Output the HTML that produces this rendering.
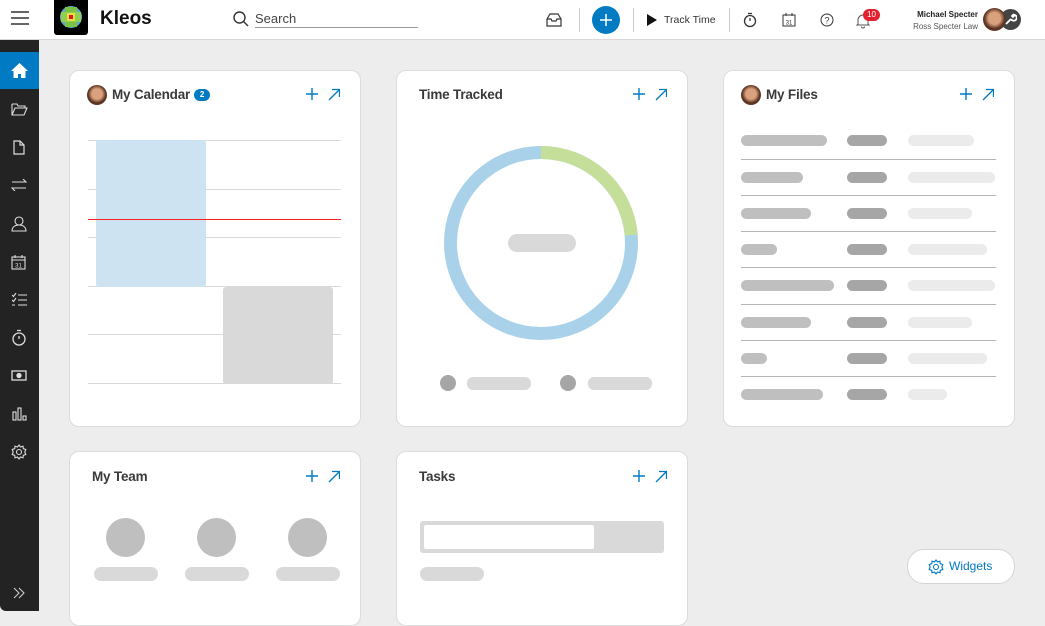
<!DOCTYPE html>
<html><head><meta charset="utf-8"><style>
*{box-sizing:border-box;margin:0;padding:0}
body{width:1045px;height:611px;overflow:hidden;background:#ededed;font-family:"Liberation Sans",sans-serif;position:relative}
.a{position:absolute}
.hdr{left:0;top:0;width:1045px;height:40px;background:#fff;border-bottom:1px solid #d8d8d8}
.side{left:0;top:40px;width:39px;height:571px;background:#232323;border-bottom-left-radius:6px}
.card{position:absolute;background:#fff;border:1px solid #dcdcdc;border-radius:10px}
.t{position:absolute;font-size:13.5px;font-weight:bold;color:#3a3a3a;letter-spacing:-0.2px}
.p{position:absolute;border-radius:6px}
.ln{position:absolute;height:1px;background:#d9d9d9}
.fl{position:absolute;height:1px;background:#b5b5b5;left:741px;width:255px}
</style></head><body>
<div class="a hdr">
 <svg class="a" style="left:11px;top:11px" width="18" height="14"><path d="M0 1h18M0 7h18M0 13h18" stroke="#333" stroke-width="1.5"/></svg>
 <div class="a" style="left:54px;top:0;width:34px;height:35px;background:#000;border-radius:0 0 3px 3px"></div>
 <svg class="a" style="left:59px;top:5px" width="24" height="24"><circle cx="12" cy="12" r="11" fill="#5aa9d8"/><rect x="6" y="2" width="12" height="20" fill="#7cc242"/><rect x="2" y="7" width="20" height="10" fill="#93cf4f"/><rect x="8" y="8" width="8" height="8" fill="#e8e04a"/><rect x="10" y="10" width="4" height="4" fill="#e4161e"/></svg>
 <div class="a" style="left:100px;top:8px;font-size:19px;font-weight:bold;color:#111">Kleos</div>
 <svg class="a" style="left:233px;top:11px" width="16" height="16"><circle cx="6.5" cy="6.5" r="5.5" stroke="#333" stroke-width="1.4" fill="none"/><path d="M10.5 10.5l4.5 4.5" stroke="#333" stroke-width="1.4"/></svg>
 <div class="a" style="left:255px;top:11px;font-size:13px;color:#444">Search</div>
 <div class="a" style="left:255px;top:27px;width:163px;height:1px;background:#999"></div>
 <svg class="a" style="left:546px;top:13px" width="16" height="14"><path d="M1 6l3-5h8l3 5v7H1zM1 6h4l1 2h4l1-2h4" stroke="#333" stroke-width="1.2" fill="none"/></svg>
 <div class="a" style="left:579px;top:8px;width:1px;height:24px;background:#ccc"></div>
 <div class="a" style="left:592px;top:6px;width:28px;height:28px;border-radius:50%;background:#007ac3"></div>
 <svg class="a" style="left:598px;top:12px" width="16" height="16"><path d="M8 2v12M2 8h12" stroke="#fff" stroke-width="1.5"/></svg>
 <div class="a" style="left:633px;top:8px;width:1px;height:24px;background:#ccc"></div>
 <svg class="a" style="left:647px;top:14px" width="10" height="12"><path d="M0 0l10 6-10 6z" fill="#111"/></svg>
 <div class="a" style="left:664px;top:14px;font-size:10.5px;color:#333">Track Time</div>
 <div class="a" style="left:729px;top:8px;width:1px;height:24px;background:#ccc"></div>
 <svg class="a" style="left:743px;top:12px" width="14" height="16"><circle cx="7" cy="9" r="5.5" stroke="#333" stroke-width="1.3" fill="none"/><path d="M5 1.5h4M7 9V6" stroke="#333" stroke-width="1.3"/></svg>
 <svg class="a" style="left:782px;top:12px" width="14" height="15"><rect x="1" y="3" width="12" height="11" stroke="#333" fill="none"/><path d="M4 1v3M10 1v3" stroke="#333"/><text x="7" y="12.5" font-size="6" text-anchor="middle" fill="#333" font-family="Liberation Sans">31</text></svg>
 <svg class="a" style="left:820px;top:13px" width="14" height="14"><circle cx="7" cy="7" r="6" stroke="#333" fill="none"/><text x="7" y="10.5" font-size="9" text-anchor="middle" fill="#333" font-family="Liberation Sans">?</text></svg>
 <svg class="a" style="left:856px;top:13px" width="14" height="16"><path d="M2 11V7a5 5 0 0110 0v4l1 1H1zM5.5 13.5a1.5 1.5 0 003 0" stroke="#555" fill="none"/></svg>
 <div class="a" style="left:863px;top:9px;width:17px;height:12px;border-radius:6px;background:#e5202e;color:#fff;font-size:8px;text-align:center;line-height:12px">10</div>
 <div class="a" style="left:900px;top:10px;width:78px;text-align:right;font-size:8px;font-weight:bold;color:#222">Michael Specter</div>
 <div class="a" style="left:895px;top:22px;width:83px;text-align:right;font-size:8px;color:#555">Ross Specter Law</div>
 <div class="a" style="left:1000px;top:9px;width:21px;height:21px;border-radius:50%;background:#444"></div>
 <svg class="a" style="left:1004px;top:13px" width="13" height="13"><path d="M2 11l5-5M7 6a3 3 0 104-4l-2 2-1-1 2-2" stroke="#fff" stroke-width="1.8" fill="none"/></svg>
 <div class="a" style="left:983px;top:8px;width:23px;height:23px;border-radius:50%;background:radial-gradient(circle at 50% 45%,#d9a17c 0 35%,#5a3222 60%,#7a4a35)"></div>
</div>
<div class="a side">
 <div class="a" style="left:0;top:12px;width:39px;height:37px;background:#007ac3"></div>
 <svg class="a" style="left:11px;top:23px" width="17" height="15"><path d="M8.5 0L0 8h2.5v7h4.5v-4h3v4h4.5V8H17z" fill="#fff"/></svg>
 <svg class="a" style="left:11px;top:62px" width="17" height="14" fill="none" stroke="#ddd" stroke-width="1.1"><path d="M1 2h5l1 2h7v2M1 2v11h12l3-7H4l-3 7"/></svg>
 <svg class="a" style="left:13px;top:100px" width="12" height="15" fill="none" stroke="#ddd" stroke-width="1.2"><path d="M1 1h6l4 4v9H1zM7 1v4h4"/></svg>
 <svg class="a" style="left:11px;top:139px" width="16" height="12" fill="none" stroke="#ddd" stroke-width="1.1"><path d="M1 3h14l-3-3M15 9H1l3 3"/></svg>
 <svg class="a" style="left:11px;top:176px" width="16" height="16" fill="none" stroke="#ddd" stroke-width="1.1"><circle cx="8" cy="5" r="4"/><path d="M1 15c0-4 3-6 7-6s7 2 7 6z"/></svg>
 <svg class="a" style="left:11px;top:214px" width="15" height="16" fill="none" stroke="#ddd" stroke-width="1.1"><rect x="1" y="3" width="13" height="12"/><path d="M4 1v3M11 1v3M1 6h13"/><text x="7.5" y="13.5" font-size="6" text-anchor="middle" fill="#ddd" stroke="none" font-family="Liberation Sans">31</text></svg>
 <svg class="a" style="left:12px;top:253px" width="15" height="13" fill="none" stroke="#ddd" stroke-width="1.1"><path d="M0 2l1.5 1.5L4 0M0 7l1.5 1.5L4 5M0 12h3M6 2h9M6 7h9M6 12h9"/></svg>
 <svg class="a" style="left:12px;top:289px" width="14" height="17" fill="none" stroke="#ddd" stroke-width="1.3"><circle cx="7" cy="10" r="6"/><path d="M5 1.5h4M7 10V7"/></svg>
 <svg class="a" style="left:11px;top:330px" width="16" height="11" fill="none" stroke="#ddd" stroke-width="1.3"><rect x="1" y="1" width="14" height="9"/><circle cx="8" cy="5.5" r="2" fill="#ddd"/></svg>
 <svg class="a" style="left:12px;top:367px" width="15" height="14" fill="none" stroke="#ddd" stroke-width="1.1"><rect x="1" y="5" width="3" height="8"/><rect x="6" y="1" width="3" height="12"/><rect x="11" y="9" width="3" height="4"/></svg>
 <svg class="a" style="left:11px;top:404px" width="16" height="16" fill="none" stroke="#ddd" stroke-width="1.1"><circle cx="8" cy="8" r="2.5"/><path d="M8 1l1.5 2 2.5-.8.3 2.5 2.5.8-1 2.5 1 2.5-2.5.8-.3 2.5-2.5-.8L8 15l-1.5-2-2.5.8-.3-2.5-2.5-.8 1-2.5-1-2.5 2.5-.8.3-2.5 2.5.8z"/></svg>
 <svg class="a" style="left:13px;top:547px" width="12" height="12" fill="none" stroke="#ccc" stroke-width="1.1"><path d="M1 1l5 5-5 5M6 1l5 5-5 5"/></svg>
</div>

<!-- Calendar card -->
<div class="card" style="left:69px;top:70px;width:292px;height:357px"></div>
<div class="a" style="left:87px;top:85px;width:20px;height:20px;border-radius:50%;background:radial-gradient(circle at 50% 45%,#d9a17c 0 35%,#5a3222 60%,#7a4a35)"></div>
<div class="t" style="left:112px;top:87px;display:flex;align-items:center;gap:4px">My Calendar<span style="display:inline-block;width:16px;height:12px;border-radius:6px;background:#007ac3;color:#fff;font-size:8px;font-weight:bold;text-align:center;line-height:12px;letter-spacing:0">2</span></div>
<div class="ln" style="left:88px;top:140px;width:253px"></div>
<div class="ln" style="left:88px;top:189px;width:253px"></div>
<div class="ln" style="left:88px;top:237px;width:253px"></div>
<div class="ln" style="left:88px;top:286px;width:253px"></div>
<div class="ln" style="left:88px;top:334px;width:253px"></div>
<div class="ln" style="left:88px;top:383px;width:253px"></div>
<div class="a" style="left:96px;top:140px;width:110px;height:147px;background:#cde3f2;border-radius:3px"></div>
<div class="a" style="left:223px;top:287px;width:110px;height:97px;background:#d9d9d9;border-radius:3px"></div>
<div class="a" style="left:88px;top:219px;width:253px;height:1px;background:#ff2020"></div>

<!-- Time tracked -->
<div class="card" style="left:396px;top:70px;width:292px;height:357px"></div>
<div class="t" style="left:419px;top:87px">Time Tracked</div>
<svg class="a" style="left:441px;top:143px" width="200" height="200"><circle cx="100" cy="100" r="90.5" stroke="#a9d2ea" stroke-width="13" fill="none"/><path d="M100 9.5A90.5 90.5 0 0 1 190.3 92" stroke="#c5df9a" stroke-width="13" fill="none"/></svg>
<div class="p" style="left:508px;top:234px;width:68px;height:18px;border-radius:9px;background:#d9d9d9"></div>
<div class="a" style="left:440px;top:375px;width:16px;height:16px;border-radius:50%;background:#a6a6a6"></div>
<div class="p" style="left:467px;top:377px;width:64px;height:13px;background:#d9d9d9"></div>
<div class="a" style="left:560px;top:375px;width:16px;height:16px;border-radius:50%;background:#a6a6a6"></div>
<div class="p" style="left:588px;top:377px;width:64px;height:13px;background:#d9d9d9"></div>

<!-- Files -->
<div class="card" style="left:723px;top:70px;width:292px;height:357px"></div>
<div class="a" style="left:741px;top:85px;width:20px;height:20px;border-radius:50%;background:radial-gradient(circle at 50% 45%,#d9a17c 0 35%,#5a3222 60%,#7a4a35)"></div>
<div class="t" style="left:766px;top:87px">My Files</div>

<div class="p" style="left:741px;top:135px;width:86px;height:11px;background:#bfbfbf"></div><div class="p" style="left:847px;top:135px;width:40px;height:11px;background:#a6a6a6"></div><div class="p" style="left:908px;top:135px;width:66px;height:11px;background:#ebebeb"></div>
<div class="fl" style="top:159px"></div>
<div class="p" style="left:741px;top:172px;width:62px;height:11px;background:#bfbfbf"></div><div class="p" style="left:847px;top:172px;width:40px;height:11px;background:#a6a6a6"></div><div class="p" style="left:908px;top:172px;width:87px;height:11px;background:#ebebeb"></div>
<div class="fl" style="top:195px"></div>
<div class="p" style="left:741px;top:208px;width:70px;height:11px;background:#bfbfbf"></div><div class="p" style="left:847px;top:208px;width:40px;height:11px;background:#a6a6a6"></div><div class="p" style="left:908px;top:208px;width:64px;height:11px;background:#ebebeb"></div>
<div class="fl" style="top:231px"></div>
<div class="p" style="left:741px;top:244px;width:36px;height:11px;background:#bfbfbf"></div><div class="p" style="left:847px;top:244px;width:40px;height:11px;background:#a6a6a6"></div><div class="p" style="left:908px;top:244px;width:79px;height:11px;background:#ebebeb"></div>
<div class="fl" style="top:267px"></div>
<div class="p" style="left:741px;top:280px;width:93px;height:11px;background:#bfbfbf"></div><div class="p" style="left:847px;top:280px;width:40px;height:11px;background:#a6a6a6"></div><div class="p" style="left:908px;top:280px;width:87px;height:11px;background:#ebebeb"></div>
<div class="fl" style="top:304px"></div>
<div class="p" style="left:741px;top:317px;width:70px;height:11px;background:#bfbfbf"></div><div class="p" style="left:847px;top:317px;width:40px;height:11px;background:#a6a6a6"></div><div class="p" style="left:908px;top:317px;width:64px;height:11px;background:#ebebeb"></div>
<div class="fl" style="top:340px"></div>
<div class="p" style="left:741px;top:353px;width:26px;height:11px;background:#bfbfbf"></div><div class="p" style="left:847px;top:353px;width:40px;height:11px;background:#a6a6a6"></div><div class="p" style="left:908px;top:353px;width:79px;height:11px;background:#ebebeb"></div>
<div class="fl" style="top:376px"></div>
<div class="p" style="left:741px;top:389px;width:82px;height:11px;background:#bfbfbf"></div><div class="p" style="left:847px;top:389px;width:40px;height:11px;background:#a6a6a6"></div><div class="p" style="left:908px;top:389px;width:39px;height:11px;background:#ebebeb"></div>

<!-- Team -->
<div class="card" style="left:69px;top:451px;width:292px;height:175px"></div>
<div class="t" style="left:92px;top:469px">My Team</div>
<div class="a" style="left:106px;top:518px;width:39px;height:39px;border-radius:50%;background:#bfbfbf"></div>
<div class="a" style="left:197px;top:518px;width:39px;height:39px;border-radius:50%;background:#bfbfbf"></div>
<div class="a" style="left:288px;top:518px;width:39px;height:39px;border-radius:50%;background:#bfbfbf"></div>
<div class="p" style="left:94px;top:567px;width:64px;height:14px;border-radius:7px;background:#d9d9d9"></div>
<div class="p" style="left:185px;top:567px;width:64px;height:14px;border-radius:7px;background:#d9d9d9"></div>
<div class="p" style="left:276px;top:567px;width:64px;height:14px;border-radius:7px;background:#d9d9d9"></div>

<!-- Tasks -->
<div class="card" style="left:396px;top:451px;width:292px;height:175px"></div>
<div class="t" style="left:419px;top:469px">Tasks</div>
<div class="a" style="left:420px;top:521px;width:244px;height:32px;background:#d9d9d9;border-radius:3px"></div>
<div class="a" style="left:424px;top:525px;width:170px;height:24px;background:#fff;border-radius:2px"></div>
<div class="p" style="left:420px;top:567px;width:64px;height:14px;border-radius:7px;background:#d9d9d9"></div>

<svg class="a" style="left:305px;top:87px" width="35" height="14"><path d="M7 1v12M1 7h12" stroke="#007ac3" stroke-width="1.4"/><path d="M24 13L34 3M27 2.5h7.5V10" stroke="#007ac3" stroke-width="1.3" fill="none"/></svg>
<svg class="a" style="left:632px;top:87px" width="35" height="14"><path d="M7 1v12M1 7h12" stroke="#007ac3" stroke-width="1.4"/><path d="M24 13L34 3M27 2.5h7.5V10" stroke="#007ac3" stroke-width="1.3" fill="none"/></svg>
<svg class="a" style="left:959px;top:87px" width="35" height="14"><path d="M7 1v12M1 7h12" stroke="#007ac3" stroke-width="1.4"/><path d="M24 13L34 3M27 2.5h7.5V10" stroke="#007ac3" stroke-width="1.3" fill="none"/></svg>
<svg class="a" style="left:305px;top:469px" width="35" height="14"><path d="M7 1v12M1 7h12" stroke="#007ac3" stroke-width="1.4"/><path d="M24 13L34 3M27 2.5h7.5V10" stroke="#007ac3" stroke-width="1.3" fill="none"/></svg>
<svg class="a" style="left:632px;top:469px" width="35" height="14"><path d="M7 1v12M1 7h12" stroke="#007ac3" stroke-width="1.4"/><path d="M24 13L34 3M27 2.5h7.5V10" stroke="#007ac3" stroke-width="1.3" fill="none"/></svg>

<div class="a" style="left:907px;top:549px;width:108px;height:35px;background:#fff;border:1px solid #d5d5d5;border-radius:17px"></div>
<svg class="a" style="left:928px;top:559px" width="16" height="16" fill="none" stroke="#007ac3" stroke-width="1.1"><circle cx="8" cy="8" r="2.5"/><path d="M8 1l1.5 2 2.5-.8.3 2.5 2.5.8-1 2.5 1 2.5-2.5.8-.3 2.5-2.5-.8L8 15l-1.5-2-2.5.8-.3-2.5-2.5-.8 1-2.5-1-2.5 2.5-.8.3-2.5 2.5.8z"/></svg>
<div class="a" style="left:949px;top:559px;font-size:12px;color:#007ac3">Widgets</div>
</body></html>
